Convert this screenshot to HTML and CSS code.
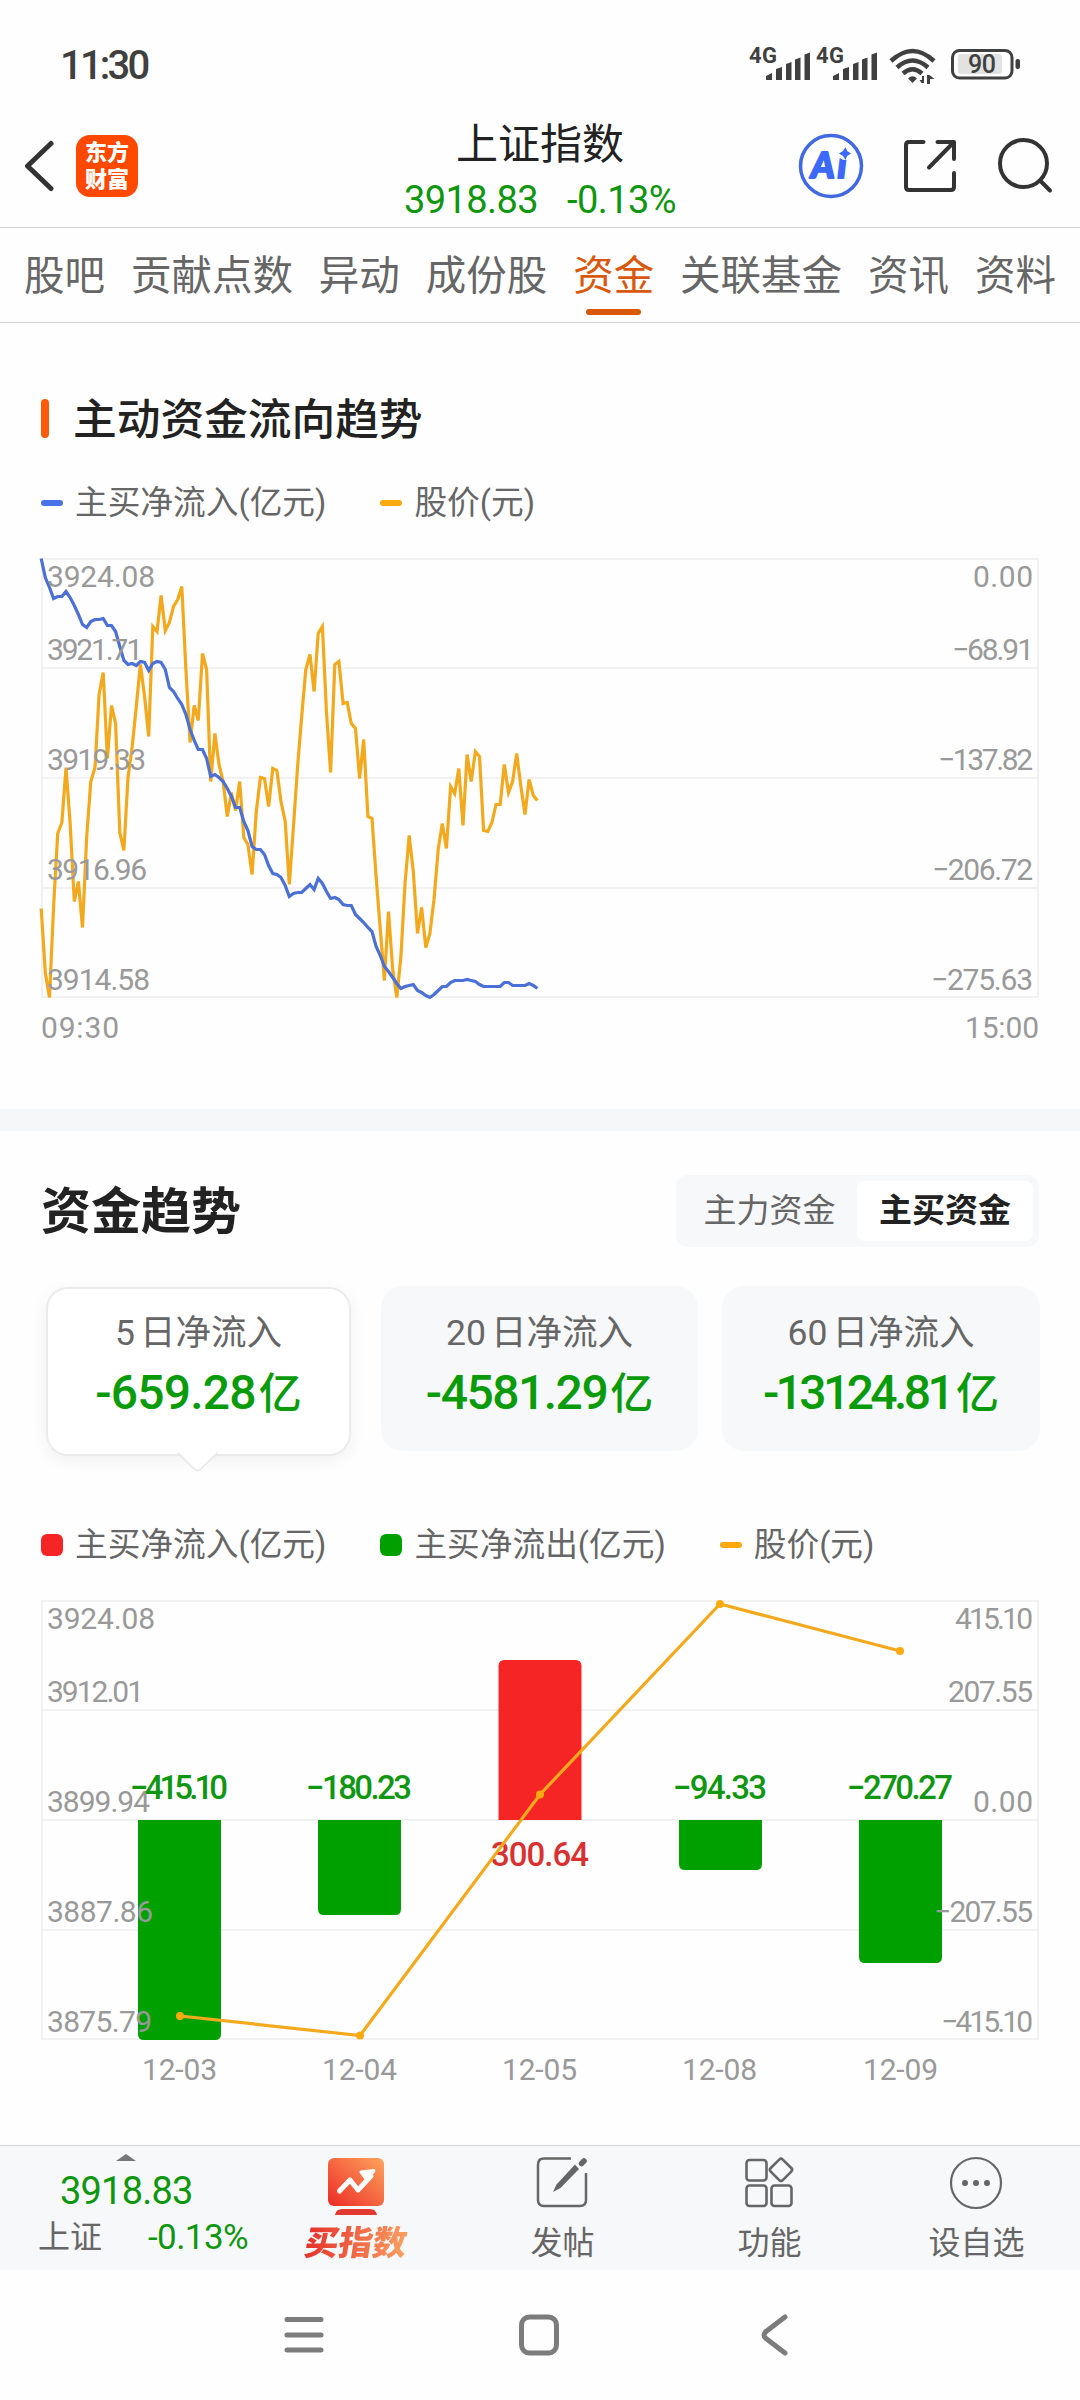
FILE: index.html
```html
<!DOCTYPE html>
<html lang="zh-CN">
<head>
<meta charset="UTF-8">
<meta name="viewport" content="width=device-width, initial-scale=1.0">
<title>上证指数 - 资金</title>
<link rel="stylesheet" href="styles.css">
</head>
<body>
<div class="statusbar">
    <span class="clock">11:30</span>
    <svg class="status-icons" width="280" height="50" viewBox="745 40 280 50">
        <g fill="#404040">
            <text x="749" y="63" class="net" textLength="28">4G</text>
            <path id="signal" d="M766 80v-4l6-3v7zM776 80V69l6-2v13zM786 80V64l5.500-2v18zM795 80V59.500l5.500-2V80zM804.500 80V54.500l5.500-2V80z"/>
            <text x="816" y="63" class="net" textLength="28">4G</text>
            <use href="#signal" x="67"/>
            <path d="M912.500 83l-4.500-4.500q4.500-4.500 9 0z"/>
            <path d="M924 76v7h-2.500l-2-3h2.500v-4zM927 84v-9h2.500l5 4h-4.500v5z"/>
        </g>
        <g fill="none" stroke="#404040" stroke-width="4.500">
            <path d="M891 61q21.500-20 43 0"/>
            <path d="M897 67.500q15.500-14 31 0"/>
            <path d="M903 73.500q9.500-8.500 19 0"/>
        </g>
        <rect x="958" y="54" width="44" height="20" rx="3" fill="#e2e2e2"/>
        <rect x="952.500" y="50.500" width="59.500" height="27.500" rx="7" fill="none" stroke="#404040" stroke-width="3"/>
        <rect x="1015.500" y="59" width="4.500" height="10" rx="2" fill="#404040"/>
        <text x="968" y="73" class="battery" textLength="28">90</text>
    </svg>
</div>

<div class="header">
    <div class="header-left">
        <svg width="30" height="52" viewBox="0 0 30 52"><path d="M27 3.500L3.500 26 27 48.500" fill="none" stroke="#333" stroke-width="5" stroke-linecap="round" stroke-linejoin="round"/></svg>
        <div class="logo">东方<br>财富</div>
    </div>
    <div class="header-title">
        <h1>上证指数</h1>
        <div class="quote"><span>3918.83</span><span>-0.13%</span></div>
    </div>
    <svg class="header-icons" width="260" height="70" viewBox="795 131 260 70">
        <circle cx="831" cy="166" r="30.500" fill="none" stroke="#4169e1" stroke-width="3.500"/>
        <text x="811" y="178" class="ai">A<tspan x="837.500">i</tspan></text>
        <circle cx="845" cy="153" r="7" fill="#fefefe"/>
        <path d="M845.500 147l1.600 4 4 2.500-4 2.500-1.600 4-2.500-4-4-2.500 4-2.500z" fill="#3c69fb"/>
        <g fill="none" stroke="#333" stroke-width="4" stroke-linecap="round" stroke-linejoin="round">
            <path d="M923.500 142H909q-3 0-3 3v42q0 3 3 3h42q3 0 3-3v-14M937.500 142H954v17M929 167.500L953 143"/>
            <circle cx="1023.500" cy="163.500" r="23.500"/>
            <path d="M1040 180.500l10 10"/>
        </g>
    </svg>
</div>

<div class="tabs">
    <span>股吧</span>
    <span>贡献点数</span>
    <span>异动</span>
    <span>成份股</span>
    <span class="active">资金</span>
    <span>关联基金</span>
    <span>资讯</span>
    <span>资料</span>
</div>

<div class="panel flow">
    <h2 class="bar-title"><span>主动资金流向趋势</span></h2>
    <div class="legend">
        <span class="legend-item"><i class="dash blue"></i>主买净流入(亿元)</span>
        <span class="legend-item"><i class="dash orange"></i>股价(元)</span>
    </div>
    <svg class="chart" width="1080" height="520" viewBox="0 0 1080 520">
        <g class="grid">
            <rect x="42" y="19" width="996" height="438"/>
            <path d="M41 128h998M41 238h998M41 348h998"/>
        </g>
        <polyline id="price-line" class="line price"/>
        <polyline id="flow-line" class="line inflow"/>
        <g class="axis">
            <text x="47" y="47" textLength="108">3924.08</text>
            <text x="47" y="120" textLength="96">3921.71</text>
            <text x="47" y="230" textLength="99">3919.33</text>
            <text x="47" y="340" textLength="100">3916.96</text>
            <text x="47" y="450" textLength="103">3914.58</text>
            <text x="973" y="47" textLength="60">0.00</text>
            <text x="952" y="120" textLength="82">−68.91</text>
            <text x="938" y="230" textLength="95">−137.82</text>
            <text x="932" y="340" textLength="101">−206.72</text>
            <text x="931" y="450" textLength="102">−275.63</text>
            <text x="41" y="498" textLength="78">09:30</text>
            <text x="965" y="498" textLength="74">15:00</text>
        </g>
    </svg>
</div>

<div class="panel trend">
    <div class="trend-head">
        <h2>资金趋势</h2>
        <div class="switch">
            <span>主力资金</span>
            <span class="on">主买资金</span>
        </div>
    </div>
    <div class="cards">
        <div class="card selected">
            <div class="card-label"><b>5</b>日净流入</div>
            <div class="card-value">-659.28<small>亿</small></div>
        </div>
        <div class="card">
            <div class="card-label"><b>20</b>日净流入</div>
            <div class="card-value tight">-4581.29<small>亿</small></div>
        </div>
        <div class="card">
            <div class="card-label"><b>60</b>日净流入</div>
            <div class="card-value tighter">-13124.81<small>亿</small></div>
        </div>
    </div>
    <div class="legend">
        <span class="legend-item"><i class="square red"></i>主买净流入(亿元)</span>
        <span class="legend-item"><i class="square green"></i>主买净流出(亿元)</span>
        <span class="legend-item"><i class="dash orange"></i>股价(元)</span>
    </div>
    <svg class="chart" width="1080" height="520" viewBox="0 0 1080 520">
        <g class="grid">
            <rect x="42" y="21" width="996" height="438"/>
            <path d="M41 130h998M41 240h998M41 350h998"/>
        </g>
        <g fill="#00a000">
            <path d="M138 240h83v214q0 6-6 6h-71q-6 0-6-6z"/>
            <path d="M318 240h83v89q0 6-6 6h-71q-6 0-6-6z"/>
            <path d="M679 240h83v44q0 6-6 6h-71q-6 0-6-6z"/>
            <path d="M859 240h83v137q0 6-6 6h-71q-6 0-6-6z"/>
        </g>
        <path d="M498.500 240V86q0-6 6-6h71q6 0 6 6v154z" fill="#f52525"/>
        <g class="axis">
            <text x="47" y="49" textLength="108">3924.08</text>
            <text x="47" y="122" textLength="97">3912.01</text>
            <text x="47" y="232" textLength="103">3899.94</text>
            <text x="47" y="342" textLength="106">3887.86</text>
            <text x="47" y="452" textLength="105">3875.79</text>
            <text x="955" y="49" textLength="78">415.10</text>
            <text x="948" y="122" textLength="85">207.55</text>
            <text x="973" y="232" textLength="60">0.00</text>
            <text x="934" y="342" textLength="99">−207.55</text>
            <text x="941" y="452" textLength="92">−415.10</text>
            <text x="142" y="500" textLength="75">12-03</text>
            <text x="322" y="500" textLength="75">12-04</text>
            <text x="502" y="500" textLength="75">12-05</text>
            <text x="682" y="500" textLength="75">12-08</text>
            <text x="863" y="500" textLength="75">12-09</text>
        </g>
        <g class="bar-value">
            <text x="130" y="219" textLength="98">−415.10</text>
            <text x="306" y="219" textLength="106">−180.23</text>
            <text x="673" y="219" textLength="94">−94.33</text>
            <text x="847" y="219" textLength="106">−270.27</text>
            <text x="491" y="286" textLength="98" class="up">300.64</text>
        </g>
        <polyline class="line price" points="180,436 360,455.500 540,214.500 720,24 900,71"/>
        <g fill="#faa90f">
            <circle cx="180" cy="436" r="4"/>
            <circle cx="360" cy="455.500" r="4"/>
            <circle cx="540" cy="214.500" r="4"/>
            <circle cx="720" cy="24" r="4"/>
            <circle cx="900" cy="71" r="4"/>
        </g>
    </svg>
</div>

<div class="toolbar">
    <div class="index-box">
        <i class="arrow"></i>
        <div class="index-price">3918.83</div>
        <div class="index-row"><span>上证</span><span class="pct">-0.13%</span></div>
    </div>
    <div class="tool">
        <svg width="58" height="60" viewBox="0 0 58 60">
            <defs>
                <linearGradient id="buy" x1="0" y1="1" x2="1" y2="0">
                    <stop offset="0" stop-color="#ec2a26"/>
                    <stop offset="1" stop-color="#ffa55c"/>
                </linearGradient>
            </defs>
            <rect x="1" y="3" width="56" height="48" rx="6" fill="url(#buy)"/>
            <path d="M8 60q1-6 7-6h28q6 0 7 6z" fill="#e23a30"/>
            <path d="M12.500 36L23 25l8 10 13-14" fill="none" stroke="#fff" stroke-width="5" stroke-linecap="round" stroke-linejoin="round"/>
            <path d="M34 17l13-1.500L40 25z" fill="#fff" stroke="#fff" stroke-width="3" stroke-linejoin="round"/>
        </svg>
        <span class="buy">买指数</span>
    </div>
    <div class="tool">
        <svg width="58" height="60" viewBox="0 0 58 60" fill="none" stroke="#666" stroke-width="2.500">
            <path d="M37 3.500H10q-6 0-6 6V45q0 6 6 6h36q6 0 6-6V18"/>
            <path d="M41 9.500l4 4.500-18.500 19-7.500 4 3.500-7.500z" fill="#666" stroke="none"/>
            <path d="M47.500 8.500l2.500-2.500" stroke-width="5.500" stroke-linecap="round"/>
        </svg>
        <span>发帖</span>
    </div>
    <div class="tool">
        <svg width="58" height="60" viewBox="0 0 58 60" fill="none" stroke="#666" stroke-width="2.600">
            <rect x="5.500" y="5" width="20" height="20.500" rx="3"/>
            <rect x="5.500" y="30.500" width="20" height="20.500" rx="3"/>
            <rect x="30.500" y="30.500" width="20" height="20.500" rx="3"/>
            <rect x="31.500" y="6.300" width="17" height="17" rx="2.500" transform="rotate(45 40 14.800)"/>
        </svg>
        <span>功能</span>
    </div>
    <div class="tool">
        <svg width="58" height="60" viewBox="0 0 58 60">
            <circle cx="28" cy="28" r="25" fill="none" stroke="#666" stroke-width="2.200"/>
            <g fill="#666"><circle cx="17" cy="28" r="3"/><circle cx="28" cy="28" r="3"/><circle cx="39" cy="28" r="3"/></g>
        </svg>
        <span>设自选</span>
    </div>
</div>

<div class="sysnav">
    <svg width="42" height="44" viewBox="0 0 42 44"><path d="M4 6.500h34M4 22h34M4 37h34"/></svg>
    <svg width="42" height="44" viewBox="0 0 42 44"><rect x="3.500" y="4" width="35" height="36" rx="8"/></svg>
    <svg width="42" height="44" viewBox="0 0 42 44"><path d="M32 4L13 18.500q-4 3.500 0 7L32 40"/></svg>
</div>

<script>
    // one sample per minute, offset in px from the top of the grid
    const price = [
        350, 414, 439, 348, 275, 264, 209, 264, 343, 323, 369, 278, 223, 209, 136, 114, 200, 147, 165, 274,
        292, 219, 188, 148, 106, 138, 178, 68, 73, 37, 72, 64, 48, 41, 28, 111, 184, 147, 162, 95,
        111, 223, 175, 206, 223, 258, 234, 252, 223, 279, 286, 316, 254, 219, 220, 248, 210, 212, 243, 263,
        326, 269, 208, 158, 111, 96, 133, 75, 68, 154, 214, 106, 103, 145, 144, 165, 170, 220, 181, 258,
        260, 318, 371, 422, 353, 411, 439, 398, 324, 277, 313, 375, 349, 389, 375, 341, 291, 265, 290, 228,
        235, 210, 267, 196, 223, 193, 198, 272, 273, 264, 246, 246, 206, 234, 223, 195, 228, 256, 221, 237, 242
    ];
    const inflow = [
        0, 19, 29, 40, 38, 38, 33, 39, 47, 56, 66, 69, 63, 61, 61, 60, 67, 67, 73, 88,
        102, 106, 105, 107, 103, 104, 112, 105, 103, 104, 111, 129, 133, 140, 146, 156, 171, 182, 191, 191,
        200, 218, 216, 219, 223, 230, 238, 249, 249, 263, 272, 288, 291, 291, 296, 307, 315, 316, 319, 327,
        338, 335, 334, 334, 330, 326, 331, 320, 325, 333, 340, 339, 341, 346, 347, 347, 356, 360, 364, 369,
        373, 388, 397, 408, 413, 419, 425, 430, 428, 427, 426, 432, 434, 437, 439, 436, 432, 428, 428, 424,
        422, 422, 422, 421, 422, 423, 426, 428, 428, 428, 428, 428, 424, 424, 427, 427, 427, 427, 425, 427, 430
    ];

    function drawLine(id, data) {
        const points = data.map((v, i) => (41.2 + i * 4.135).toFixed(1) + ',' + (v + 18.5));
        document.getElementById(id).setAttribute('points', points.join(' '));
    }

    drawLine('price-line', price);
    drawLine('flow-line', inflow);
</script>
</body>
</html>
```

FILE: styles.css
```css
* {
    box-sizing: border-box;
}

body {
    margin: 0;
    width: 1080px;
    height: 2400px;
    background-color: #fefefe;
    color: #666;
    font-family: Roboto, "Noto Sans CJK SC", sans-serif;
}

h1, h2 {
    margin: 0;
    color: #222;
}

svg {
    display: block;
}

.statusbar {
    display: flex;
    justify-content: space-between;
    height: 105px;
    padding: 40px 55px 0 60px;
}

.clock {
    font-size: 40px;
    font-weight: 500;
    line-height: 52px;
    letter-spacing: -2.8px;
    color: #404040;
}

.net {
    font-size: 22px;
    font-weight: 700;
}

.battery {
    font-size: 25px;
    font-weight: 500;
    fill: #404040;
}

.header {
    display: grid;
    grid-template-columns: 1fr 300px 1fr;
    height: 123px;
    border-bottom: 1px solid #d2d2d2;
}

.header-left {
    display: flex;
    align-items: center;
    gap: 22px;
    padding-left: 24px;
}

.logo {
    width: 62px;
    height: 62px;
    padding-top: 4px;
    border-radius: 14px;
    background-color: #ff4800;
    color: #fff;
    font-size: 22px;
    font-weight: 900;
    line-height: 27px;
    text-align: center;
}

.header-title {
    text-align: center;
    padding-top: 14px;
}

.header-title h1 {
    font-size: 42px;
    font-weight: 400;
    line-height: 52px;
}

.quote {
    display: flex;
    justify-content: center;
    gap: 29px;
    padding-top: 4px;
    font-size: 38px;
    line-height: 50px;
    letter-spacing: -0.6px;
    color: #0f960f;
}

.header-icons {
    justify-self: end;
    margin: 26px 25px 0 0;
}

.ai {
    font-family: Lato, sans-serif;
    font-size: 36px;
    font-weight: 900;
    font-style: italic;
    fill: #3c69fb;
    stroke: #3c69fb;
    stroke-width: 2px;
    stroke-linejoin: round;
}

.tabs {
    display: flex;
    justify-content: space-between;
    height: 95px;
    padding: 1px 24px 0;
    border-bottom: 1px solid #d2d2d2;
    font-size: 40.5px;
    line-height: 94px;
}

.tabs .active {
    position: relative;
    color: #d9580d;
}

.tabs .active::after {
    content: "";
    position: absolute;
    left: 13px;
    bottom: 7px;
    width: 55px;
    height: 6px;
    border-radius: 3px;
    background-color: #d9580d;
}

.flow {
    height: 808px;
    padding-top: 65px;
    border-bottom: 22px solid #f6f7f9;
}

.bar-title {
    display: flex;
    align-items: center;
    gap: 24px;
    height: 60px;
    padding-left: 41px;
    margin-bottom: 25px;
    font-size: 43.7px;
    font-weight: 500;
}

.bar-title span {
    margin-bottom: 5px;
}

.bar-title::before {
    content: "";
    width: 8px;
    height: 39px;
    border-radius: 4px;
    background-color: #fa5a0a;
}

.legend {
    display: flex;
    height: 60px;
    padding-left: 41px;
    font-size: 32.7px;
    line-height: 62px;
}

.legend-item {
    display: flex;
    align-items: center;
    margin-right: 54px;
    white-space: nowrap;
}

.dash {
    width: 22px;
    height: 6px;
    margin-right: 12px;
    border-radius: 3px;
}

.square {
    width: 22px;
    height: 22px;
    margin-right: 12px;
    border-radius: 6px;
}

.blue { background-color: #4a72e8; }
.orange { background-color: #faa90f; }
.red { background-color: #f52525; }
.green { background-color: #00a000; }

.flow .chart {
    margin-top: 7px;
}

.grid {
    fill: none;
    stroke: #f1f1f1;
    stroke-width: 2px;
}

.line {
    fill: none;
    stroke-width: 3.2px;
}

.price { stroke: #f3a91d; }
.inflow { stroke: #4b71d6; }

.axis {
    font-size: 30px;
    fill: #999;
}

.bar-value {
    font-size: 33px;
    font-weight: 500;
    fill: #109610;
}

.bar-value .up {
    fill: #d93030;
}

.trend {
    height: 1014px;
    padding-top: 44px;
}

.trend-head {
    display: flex;
    justify-content: space-between;
    align-items: center;
    height: 72px;
    padding: 0 41px;
}

.trend-head h2 {
    margin-bottom: 8px;
    font-size: 50px;
    font-weight: 700;
}

.switch {
    display: flex;
    height: 72px;
    padding: 6px;
    border-radius: 12px;
    background-color: #f7f8fa;
    font-size: 33px;
    line-height: 60px;
    text-align: center;
}

.switch span {
    width: 175px;
}

.switch .on {
    width: 176px;
    border-radius: 8px;
    background-color: #fff;
    color: #222;
    font-weight: 700;
}

.cards {
    display: grid;
    grid-template-columns: 317px 317px 318px;
    gap: 24px;
    height: 165px;
    margin: 39px 40px 64px;
}

.card {
    height: 165px;
    padding-top: 20px;
    border-radius: 22px;
    background-color: #f7f8fa;
    text-align: center;
}

.card.selected {
    position: relative;
    height: 169px;
    margin: 1px 6px 0 6px;
    padding-top: 17px;
    border: 2px solid #ebebeb;
    background-color: #fff;
    box-shadow: 0 4px 16px rgba(0, 0, 0, 0.06);
}

.card.selected::after {
    content: "";
    position: absolute;
    left: 135px;
    bottom: -14px;
    width: 27px;
    height: 27px;
    border: solid #ebebeb;
    border-width: 0 2px 2px 0;
    border-radius: 0 0 6px 0;
    background-color: #fff;
    transform: rotate(45deg);
}

.card-label {
    font-size: 35.5px;
    line-height: 54px;
}

.card-label b {
    margin-right: 5px;
    font-weight: 400;
}

.card-value {
    font-size: 48px;
    font-weight: 500;
    line-height: 66px;
    letter-spacing: -0.8px;
    color: #0a9b0a;
}

.card-value small {
    margin-left: 3px;
    font-size: 43px;
    letter-spacing: 0;
}

.tight { letter-spacing: -1.5px; }
.tighter { letter-spacing: -3.6px; }
.tighter small { margin-left: 5px; }

.trend .legend {
    margin-bottom: 5px;
}

.toolbar {
    display: grid;
    grid-template-columns: 252px 207px 207px 207px 207px;
    height: 125px;
    border-top: 1px solid #d2d4d6;
    background-color: #f7f8fa;
}

.index-box {
    padding-top: 8px;
}

.arrow {
    display: block;
    margin-left: 116px;
    width: 0;
    border: solid transparent;
    border-width: 0 10px 7px;
    border-bottom-color: #777;
}

.index-price {
    padding-left: 60px;
    font-size: 38px;
    line-height: 60px;
    letter-spacing: -0.8px;
    color: #0f960f;
}

.index-row {
    display: flex;
    justify-content: space-between;
    padding: 0 4px 0 38px;
    font-size: 32px;
    line-height: 33px;
}

.pct {
    font-size: 35px;
    letter-spacing: -0.6px;
    color: #0f960f;
}

.tool {
    display: flex;
    flex-direction: column;
    align-items: center;
    padding-top: 9px;
    font-size: 32px;
    line-height: 56px;
}

.buy {
    font-size: 34px;
    font-weight: 900;
    transform: skewX(-9deg);
    background: linear-gradient(90deg, #e5302b, #fba060);
    -webkit-background-clip: text;
    background-clip: text;
    color: transparent;
}

.sysnav {
    display: flex;
    justify-content: center;
    gap: 193px;
    height: 130px;
    padding: 43px 2px 0 0;
}

.sysnav svg {
    fill: none;
    stroke: #7c7c7c;
    stroke-width: 5px;
    stroke-linecap: round;
}
```
